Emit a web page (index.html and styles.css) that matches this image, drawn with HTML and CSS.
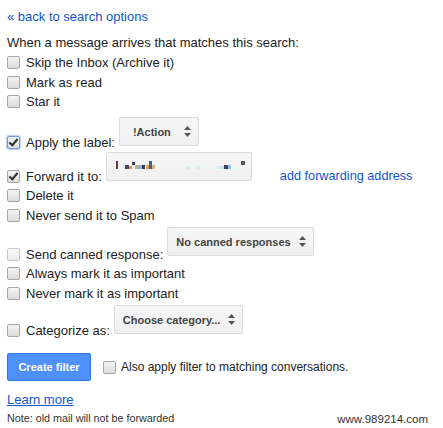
FILE: index.html
```html
<!DOCTYPE html>
<html><head>
  <meta charset="UTF-8">
  <title>Create filter</title>
  <link rel="stylesheet" href="styles.css">
</head><body>

<div class="filter">
  <a class="link back" href="#">« back to search options</a>
  <div class="intro">When a message arrives that matches this search:</div>

  <div class="opt"><span class="cb"></span>Skip the Inbox (Archive it)</div>
  <div class="opt"><span class="cb"></span>Mark as read</div>
  <div class="opt"><span class="cb"></span>Star it</div>

  <div class="opt-sel row-label">
    <span class="chk"><span class="cb cb-on cb-focus"></span>Apply the label:</span>
    <span class="sel sel-label"><span class="sel-text">!Action</span><svg class="arr" width="7" height="11" viewBox="0 0 7 11"><path d="M3.5 0L7 4H0z M3.5 11L0 7h7z"/></svg></span>
  </div>

  <div class="opt-sel row-fwd">
    <span class="chk"><span class="cb cb-on"></span>Forward it to:</span>
    <span class="sel sel-fwd">
      <svg width="144" height="27" viewBox="0 0 144 27">
        <rect x="9" y="8" width="2" height="8" fill="#6e3a3c"/>
        <rect x="18" y="12" width="4" height="4" fill="#4b4766"/>
        <rect x="22" y="13" width="3" height="3" fill="#d89c5e"/>
        <rect x="25" y="9" width="3" height="3" fill="#37404c"/>
        <rect x="28" y="12" width="3" height="4" fill="#d7a672"/>
        <rect x="31" y="12" width="4" height="4" fill="#8fb3dc"/>
        <rect x="35" y="12" width="3" height="4" fill="#383a5a"/>
        <rect x="39" y="12" width="3" height="4" fill="#d9a35f"/>
        <rect x="42" y="8" width="3" height="8" fill="#41609a"/>
        <rect x="45" y="12" width="3" height="4" fill="#ddb47f"/>
        <rect x="79" y="13" width="4" height="3" fill="#cdeef2"/>
        <rect x="89" y="13" width="4" height="3" fill="#d5eef4"/>
        <rect x="109" y="13" width="4" height="3" fill="#d3eff3"/>
        <rect x="113" y="13" width="4" height="3" fill="#c6e6f2"/>
        <rect x="117" y="12" width="4" height="4" fill="#3e455c"/>
        <rect x="121" y="12" width="3" height="4" fill="#8cc1e8"/>
        <rect x="134" y="8" width="4" height="4" fill="#555"/>
      </svg>
    </span>
    <a class="link add" href="#">add forwarding address</a>
  </div>

  <div class="opt"><span class="cb"></span>Delete it</div>
  <div class="opt"><span class="cb"></span>Never send it to Spam</div>

  <div class="opt-sel row-canned">
    <span class="chk"><span class="cb cb-dim"></span>Send canned response:</span>
    <span class="sel"><span class="sel-text">No canned responses</span><svg class="arr" width="7" height="11" viewBox="0 0 7 11"><path d="M3.5 0L7 4H0z M3.5 11L0 7h7z"/></svg></span>
  </div>

  <div class="opt"><span class="cb"></span>Always mark it as important</div>
  <div class="opt"><span class="cb"></span>Never mark it as important</div>

  <div class="opt-sel row-cat">
    <span class="chk"><span class="cb"></span>Categorize as:</span>
    <span class="sel"><span class="sel-text">Choose category...</span><svg class="arr" width="7" height="11" viewBox="0 0 7 11"><path d="M3.5 0L7 4H0z M3.5 11L0 7h7z"/></svg></span>
  </div>

  <div class="actions">
    <button class="btn" type="button">Create filter</button>
    <span class="chk also"><span class="cb"></span>Also apply filter to matching conversations.</span>
  </div>

  <a class="link learn" href="#">Learn more</a>
  <div class="note">Note: old mail will not be forwarded</div>
</div>

<div class="mark">www.989214.com</div>

</body></html>
```

FILE: styles.css
```css
body { margin: 0; background: white; color: #222;
  font-family: Arial, "Liberation Sans", sans-serif; font-size: 13px; }
.filter { padding: 7px 0 0 7px; }
.link { color: #15c; text-decoration: none; }
.back { display: block; line-height: 20px; }
.intro { margin-top: 6px; line-height: 20px; }

.opt, .chk { display: flex; align-items: center; height: 19.5px; }
.chk { height: 20px; }
.cb { box-sizing: border-box; width: 13px; height: 13px; margin-right: 6px;
  flex: none; position: relative;
  border: 1px solid #a6a6a6; border-radius: 2px;
  background: linear-gradient(#f4f4f4, #dcdcdc); }
.cb-dim { border-color: #c9c9c9; background: linear-gradient(#f8f8f8, #ebebeb); }
.cb-focus { border-color: #6f9be0; box-shadow: 0 0 1px 1px #b9d0f2; }
.cb-on::after { content: ""; position: absolute; left: 3px; top: 0px;
  width: 3px; height: 7px; border: solid #2d2d2d;
  border-width: 0 2px 2px 0; transform: rotate(40deg); }

.opt-sel { display: flex; align-items: flex-end; }
.opt-sel .sel { margin-left: 4px; }
.sel { box-sizing: border-box; height: 29px; display: inline-flex;
  align-items: center; gap: 8px; padding: 0 7px 0 8px;
  border: 1px solid #dcdcdc; border-radius: 2px;
  background: linear-gradient(#f6f6f6, #f0f0f0);
  font-size: 11px; font-weight: bold; color: #444; }
.sel-label { width: 80px; }
.sel-label .sel-text { flex: 1; text-align: center; }
.arr { fill: #555; flex: none; }
.sel-fwd { width: 146px; padding: 0; }

.row-label { margin-top: 5.5px; }
.row-label .sel { margin-bottom: 6px; }
.row-fwd .sel { margin-bottom: 5px; }
.row-fwd .add { line-height: 20px; margin-left: 28px; font-size: 12.7px; }
.row-canned { margin-top: 2px; }
.row-canned .sel { margin-bottom: 8px; }
.row-cat { margin-top: 2px; }
.row-cat .sel { margin-bottom: 6px; }

.actions { display: flex; align-items: center; margin-top: 13px; }
.btn { box-sizing: border-box; width: 84px; height: 28px; margin-right: 12px;
  border: 1px solid #3079ed; border-radius: 2px; background: #4d90fe;
  color: white; font-family: inherit; font-size: 11px; font-weight: bold; }
.actions .cb { margin-right: 5px; }
.also { font-size: 12px; }

.learn { display: block; width: max-content; margin-top: 9px;
  line-height: 20px; text-decoration: underline; }
.note { margin-top: 2px; font-size: 10.75px; line-height: 12px; color: #333; }

.mark { position: absolute; right: 15px; top: 412px;
  font-size: 11.5px; line-height: 14px; color: #333; }
```
